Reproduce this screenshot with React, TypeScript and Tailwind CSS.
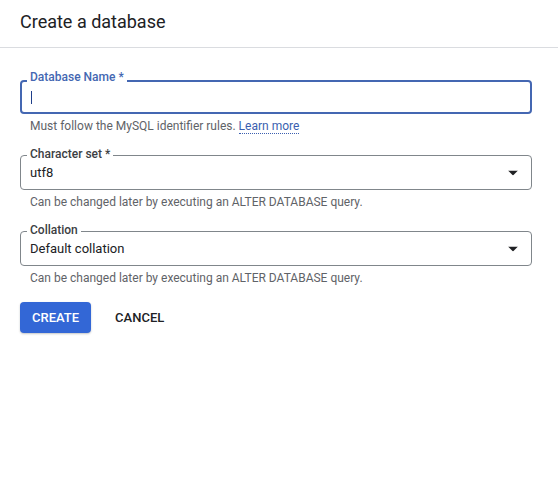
import React from 'react';

function Arrow() {
  return (
    <svg width="10" height="5" viewBox="0 0 10 5" className="absolute right-[13px] top-1/2 -translate-y-1/2">
      <path d="M0 0h10L5 5z" fill="#202124" />
    </svg>
  );
}

function SelectField({ label, value, hint }: { label: string; value: string; hint: string }) {
  return (
    <div>
      <div className="relative flex h-[35px] w-[512px] items-center rounded-[4px] border border-[#80868b] px-[9px]">
        <span className="absolute left-[6px] top-[-9px] bg-white px-[3px] text-[12px] font-medium leading-[14px] text-[#3c4043]">
          {label}
        </span>
        <span className="text-[13px] leading-[16px] text-[#202124]">{value}</span>
        <Arrow />
      </div>
      <div className="mt-[5px] pl-[10px] text-[12px] leading-[14px] text-[#5f6368]">{hint}</div>
    </div>
  );
}

export default function App() {
  return (
    <div className="h-[478px] w-[558px] bg-white font-['Roboto',sans-serif]">
      <div className="h-[48px] border-b border-[#dadce0] px-5 pt-[10px]">
        <h1 className="text-[18px] leading-[24px] text-[#202124]">Create a database</h1>
      </div>
      <div className="px-5 pt-[32px]">
        <div className="flex flex-col gap-[22px]">
          <div>
            <div className="relative flex h-[34px] w-[512px] items-center rounded-[4px] border-2 border-[#4467b2] px-[9px]">
              <span className="absolute left-[5px] top-[-12px] bg-white px-[3px] text-[12px] font-medium leading-[14px] text-[#4467b2]">
                Database Name *
              </span>
              <span className="h-[13px] w-px bg-[#1f3f8a]" />
            </div>
            <div className="mt-[5px] pl-[10px] text-[12px] leading-[14px] text-[#5f6368]">
              Must follow the MySQL identifier rules.{' '}
              <span className="border-b border-dotted border-[#3b5fb0] text-[#3b5fb0]">Learn more</span>
            </div>
          </div>
          <SelectField
            label="Character set *"
            value="utf8"
            hint="Can be changed later by executing an ALTER DATABASE query."
          />
          <SelectField
            label="Collation"
            value="Default collation"
            hint="Can be changed later by executing an ALTER DATABASE query."
          />
        </div>
        <div className="mt-[17px] flex items-center gap-3">
          <button className="h-[31px] rounded-[4px] bg-[#3367d6] px-3 text-[13px] font-medium text-white shadow-[0_1px_2px_rgba(60,64,67,0.3)]">
            CREATE
          </button>
          <button className="h-[31px] px-3 text-[13px] font-medium text-[#202124]">
            CANCEL
          </button>
        </div>
      </div>
    </div>
  );
}
